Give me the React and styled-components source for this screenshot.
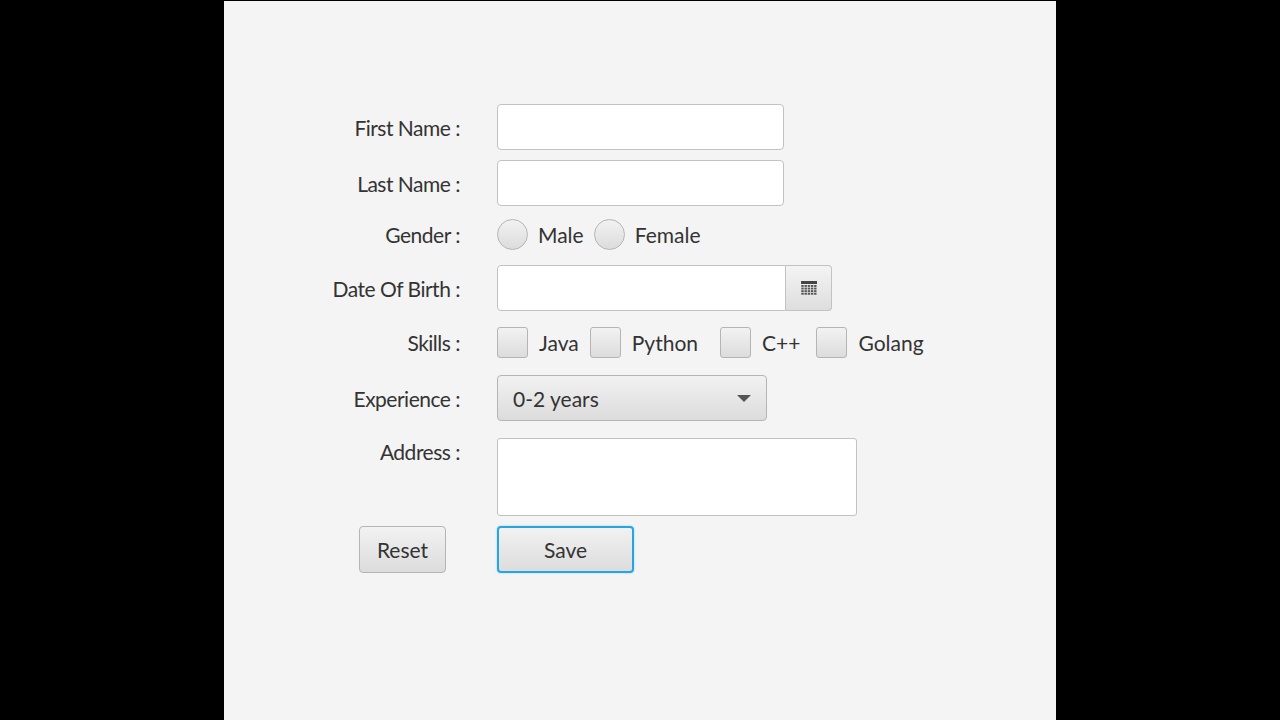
import React from "react";
import styled, { createGlobalStyle } from "styled-components";

const G = createGlobalStyle`
  html,body{margin:0;background:#000;}
  *{box-sizing:border-box;}
`;
const Panel = styled.div`
  width:832px;height:720px;margin:0 0 0 224px;background:#f4f4f4;
  font-family:"Lato","Liberation Sans",sans-serif;color:#333;font-size:21px;
  padding-top:103px;border-top:1px solid #000;
`;
const Row = styled.div`
  display:grid;grid-template-columns:236px 1fr;column-gap:37px;
  height:${p=>p.h}px;margin-top:${p=>p.mt||0}px;
  align-items:${p=>p.top?"start":"center"};
`;
const Label = styled.div`
  text-align:right;letter-spacing:-0.5px;padding-top:${p=>p.top?"1px":"0"};
  padding-right:${p=>p.pr||0}px;
`;
const Controls = styled.div`display:flex;align-items:center;height:100%;`;
const Input = styled.div`
  width:${p=>p.w}px;height:${p=>p.h||46}px;background:#fff;
  border:1px solid #c2c2c2;border-radius:${p=>p.r||"4px"};
`;
const Radio = styled.span`
  width:31px;height:31px;border-radius:50%;border:1px solid #b5b5b5;
  background:linear-gradient(#f2f2f2,#dcdcdc);margin-right:10px;
`;
const Check = styled.span`
  width:31px;height:31px;border-radius:3px;border:1px solid #b5b5b5;
  background:linear-gradient(#f2f2f2,#dcdcdc);margin-right:11px;
`;
const Opt = styled.span`margin-right:${p=>p.mr}px;`;
const CalBtn = styled.div`
  width:46px;height:46px;border:1px solid #c2c2c2;border-left:none;border-radius:0 4px 4px 0;
  background:linear-gradient(#f4f4f4,#dedede);display:flex;align-items:center;justify-content:center;
`;
const Combo = styled.div`
  width:270px;height:46px;border:1px solid #b5b5b5;border-radius:4px;
  background:linear-gradient(#f2f2f2,#dcdcdc);display:flex;align-items:center;
  justify-content:space-between;padding:0 15px;
`;
const Caret = styled.span`
  width:0;height:0;border-left:7px solid transparent;border-right:7px solid transparent;border-top:7px solid #555;
`;
const Btn = styled.div`
  width:${p=>p.w}px;height:47px;border-radius:4px;display:flex;align-items:center;justify-content:center;
  border:${p=>p.focus?"2px solid #2aa4e0":"1px solid #b5b5b5"};
  box-shadow:${p=>p.focus?"0 0 2px #7fd0f5":"none"};
  background:linear-gradient(#f2f2f2,#dcdcdc);
`;
const BtnCell = styled.div`display:flex;justify-content:flex-end;padding-right:14px;`;

const Cal = () => (
  <svg width="16" height="14" viewBox="0 0 16 14">
    <rect x="0" y="0" width="16" height="3" fill="#444"/>
    {[0,1,2,3].map(r=>[0,1,2,3,4].map(c=>(
      <rect key={r+"-"+c} x={c*3.2+0.3} y={4+r*2.6} width="2.4" height="1.9" fill="#555"/>
    )))}
  </svg>
);

export default function App(){
  return (<>
    <G/>
    <Panel>
      <Row h={46}><Label>First Name :</Label><Controls><Input w={287}/></Controls></Row>
      <Row h={46} mt={10}><Label>Last Name :</Label><Controls><Input w={287}/></Controls></Row>
      <Row h={36} mt={10}><Label>Gender :</Label><Controls>
        <Radio/><Opt mr={10}>Male</Opt><Radio/><Opt mr={0}>Female</Opt></Controls></Row>
      <Row h={46} mt={13}><Label>Date Of Birth :</Label><Controls>
        <Input w={289} r="4px 0 0 4px"/><CalBtn><Cal/></CalBtn></Controls></Row>
      <Row h={38} mt={12}><Label>Skills :</Label><Controls>
        <Check/><Opt mr={11}>Java</Opt><Check/><Opt mr={22}>Python</Opt>
        <Check/><Opt mr={16}>C++</Opt><Check/><Opt mr={0}>Golang</Opt></Controls></Row>
      <Row h={46} mt={14}><Label>Experience :</Label><Controls>
        <Combo><span>0-2 years</span><Caret/></Combo></Controls></Row>
      <Row h={78} mt={17} top><Label top>Address :</Label><Input w={360} h={78} r="3px"/></Row>
      <Row h={47} mt={10}><BtnCell><Btn w={87}>Reset</Btn></BtnCell><Controls><Btn w={137} focus>Save</Btn></Controls></Row>
    </Panel>
  </>);
}
